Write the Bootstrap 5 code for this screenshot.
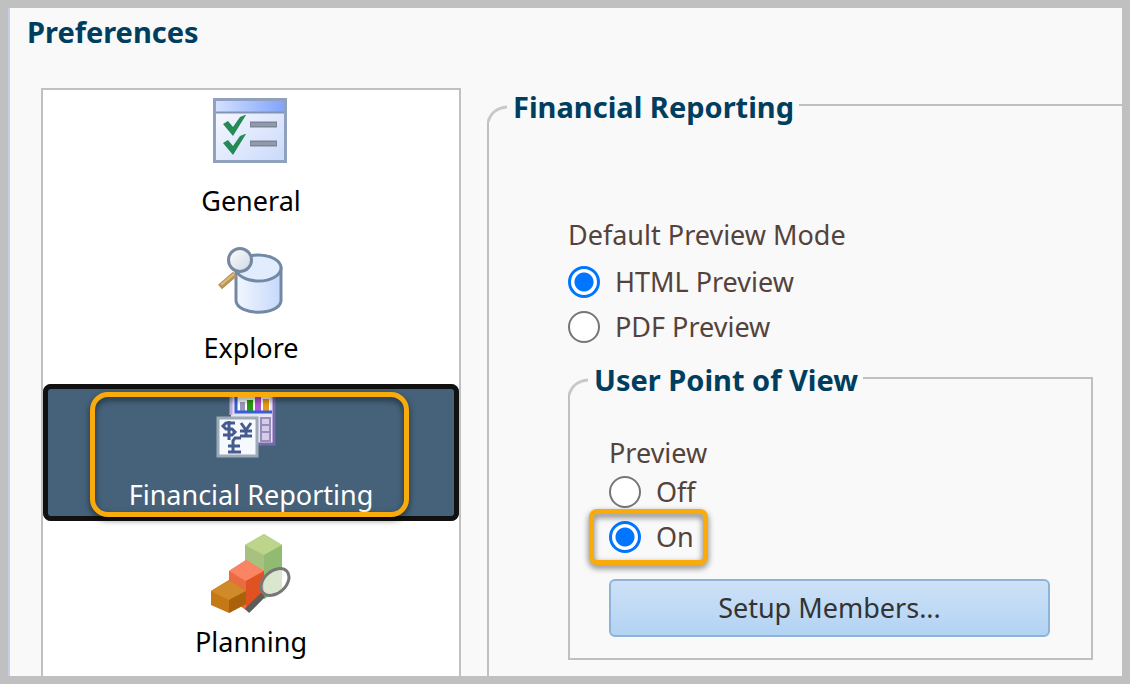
<!DOCTYPE html>
<html lang="en">
<head>
<meta charset="utf-8">
<meta name="viewport" content="width=device-width, initial-scale=1">
<title>Preferences</title>
<link href="https://cdn.jsdelivr.net/npm/bootstrap@5.3.0/dist/css/bootstrap.min.css" rel="stylesheet">
<style>
  body { font-family: "Noto Sans", "Open Sans", sans-serif; font-size: 27px; line-height: 36px; color: #54433c; }
  .window-frame { border: 8px solid #c0c0c0; background: #f9f9f9; }
  .window-edge { border-left: 2px solid #c3cfe6; }
  .heading-text { font-size: 29px; line-height: 34px; font-weight: 700; color: #003e60; }
  .page-title { padding: 7px 17px 0; margin-bottom: 39px; }
  .category-list { width: 420px; margin-left: 31px; background: #fff; border: 2px solid #c0c0c0; border-bottom: 0; }
  .category { height: 137px; padding: 3px 0 0; margin-bottom: 10px; background: none; border: 0; color: #000; gap: 10px; }
  .category svg { width: 80px; height: 80px; }
  .category.selected { background: #45627a; color: #fff; border-radius: 8px; outline: 5px solid #111; outline-offset: -5px; }
  .callout { border: 5px solid #f9ab0b; pointer-events: none; filter: drop-shadow(0 3px 3px rgba(0,0,0,.55)); }
  .callout-category { inset: 8px 50px 4px 47px; border-radius: 18px; }
  .callout-option { inset: -9px -14px -10px -20px; border-radius: 8px; }
  .group-pane { margin: 0 0 0 26px; }
  .group-pane legend { height: 34px; }
  .group-pane legend svg { width: 22px; height: 34px; }
  .group-rule { height: 2px; background: #c0c0c0; margin-left: 5px; }
  .group-body { border-left: 2px solid #c0c0c0; }
  .reporting-body { padding: 95px 29px 0 79px; }
  .view-body { border-right: 2px solid #c0c0c0; border-bottom: 2px solid #c0c0c0; padding: 40px 41px 21px 39px; }
  .view-group { margin-top: 16px; }
  /* right edge of the group, from the legend rule down to the body */
  .view-group legend::after { content: ""; width: 2px; height: 18px; background: #c0c0c0; align-self: flex-end; }
  .mode-label { margin-bottom: 10px; }
  .view-label { margin-bottom: 2px; }
  .choice { gap: 15px; height: 37px; }
  .choice .form-check-input { width: 32px; height: 32px; margin: 0; border: 2px solid #767676; background: #fff; }
  .choice .form-check-input:checked { border: 3px solid #0075ff; background: radial-gradient(circle, #0075ff 9px, #fff 10px); }
  .setup-btn { height: 58px; border: 2px solid #8eb3d8; border-radius: 6px; background: linear-gradient(#cde1f7, #b2d3f3); color: #333; font-size: 27px; }
</style>
</head>
<body>
<div class="window-frame vh-100 overflow-hidden">
  <div class="window-edge h-100 d-flex flex-column">
    <h1 class="page-title heading-text">Preferences</h1>
    <div class="d-flex flex-grow-1 overflow-hidden">
      <nav class="category-list flex-shrink-0" aria-label="Preference categories">
        <button type="button" class="category w-100 d-flex flex-column align-items-center">
          <svg viewBox="0 0 80 80" aria-hidden="true">
            <defs>
              <linearGradient id="bar" x2="1"><stop stop-color="#d4e1ff"/><stop offset="1" stop-color="#7fa2fb"/></linearGradient>
              <linearGradient id="sheet" x2="1" y2="1"><stop stop-color="#fbfcff"/><stop offset="1" stop-color="#c9d8fb"/></linearGradient>
            </defs>
            <rect x="4" y="6" width="71" height="63" fill="url(#sheet)"/>
            <rect x="4" y="6" width="71" height="13" fill="url(#bar)"/>
            <path d="M4 19.500H75" stroke="#8194b8" stroke-width="2"/>
            <rect x="3.500" y="6.500" width="71" height="62" fill="none" stroke="#8fa1bd" stroke-width="3"/>
            <path d="M12 31l5-3 5 6 7-10 5-2h1L22 43zM12 50l5-3 5 6 7-10 5-2h1L22 62z" fill="#268a55"/>
            <path d="M39 31.500H66M39 50.500H66" stroke="#7c8598" stroke-width="6"/>
            <path d="M40 31.500H65M40 50.500H65" stroke="#9199ab" stroke-width="3"/>
          </svg>
          <span>General</span>
        </button>
        <button type="button" class="category w-100 d-flex flex-column align-items-center">
          <svg viewBox="0 0 80 80" aria-hidden="true">
            <defs>
              <linearGradient id="drum" x2="1"><stop stop-color="#f2f7ff"/><stop offset="1" stop-color="#c6d8fa"/></linearGradient>
              <linearGradient id="lens" x2="1" y2="1"><stop stop-color="#fff"/><stop offset="1" stop-color="#ccd7e4"/></linearGradient>
            </defs>
            <path d="M25 28v33c2 15 43 15 45 0V28z" fill="url(#drum)" stroke="#7289a6" stroke-width="3"/>
            <ellipse cx="47.500" cy="28" rx="22.500" ry="13" fill="#e2ecff" stroke="#7289a6" stroke-width="3"/>
            <path d="M24 34L9 47" stroke="#b8935b" stroke-width="6"/>
            <path d="M23 34L10 45" stroke="#dfbd7d" stroke-width="2"/>
            <circle cx="29" cy="20" r="11.500" fill="url(#lens)" stroke="#7688a0" stroke-width="3"/>
          </svg>
          <span>Explore</span>
        </button>
        <button type="button" class="category selected w-100 d-flex flex-column align-items-center position-relative" aria-current="page">
          <svg viewBox="0 0 80 80" aria-hidden="true">
            <path d="M20 8h43v49H20z" fill="#e8e2f5"/>
            <path d="M63 8v49H46" fill="none" stroke="#7969ad" stroke-width="3"/>
            <path d="M20 8v20" stroke="#b8add7" stroke-width="3"/>
            <path d="M25 9h34v14H25z" fill="#fff"/>
            <path d="M29 15h5v9h-5z" fill="#9c98bd"/><path d="M36 13h6v11h-6z" fill="#279a10"/><path d="M44 9h6v15h-6z" fill="#b253d1"/><path d="M52 12h6v12h-6z" fill="#e39a17"/>
            <path d="M25 9v16h36" fill="none" stroke="#3460d5" stroke-width="3"/>
            <path d="M50 31h9v23h-9zM50 38h9M50 45h9" fill="#d4cce8" stroke="#988db9" stroke-width="2"/>
            <rect x="7" y="31" width="39" height="38" fill="#f6f9ff" stroke="#9dabb7" stroke-width="3"/>
            <g fill="none" stroke="#455a8e" stroke-width="3">
              <path d="M24 36h-9l-3 3 3 3h6l3 3-3 3h-9M18 34v19"/>
              <path d="M30 36l5 7 5-7M35 42v8M29 44h12M29 49h12"/>
              <path d="M30 51h-6l-2 3v11M17 59h12M17 65h13"/>
            </g>
          </svg>
          <span>Financial Reporting</span>
          <span class="callout callout-category position-absolute"></span>
        </button>
        <button type="button" class="category w-100 d-flex flex-column align-items-center">
          <svg viewBox="0 0 80 80" aria-hidden="true">
            <path d="M34 11L53 0l18 11v43L53 65 34 54z" fill="#a8c181"/>
            <path d="M34 11L53 0l18 11-18 10z" fill="#bcd58b"/><path d="M53 21l18-10v43L53 65z" fill="#91bb70"/>
            <path d="M18 37l17-11 18 11v26L35 76 18 65z" fill="#ea6a42"/>
            <path d="M18 37l17-11 18 11-18 10z" fill="#fb8465"/><path d="M35 47l18-10v26L35 75z" fill="#df5222"/>
            <path d="M0 57l18-11 17 11v13L18 79 0 71z" fill="#c47915"/>
            <path d="M0 57l18-11 17 11-17 9z" fill="#d08a29"/><path d="M18 66l17-9v13l-17 9z" fill="#a9620b"/>
            <ellipse cx="64" cy="48" rx="16" ry="11" transform="rotate(-42 64 48)" fill="#fff" fill-opacity=".65" stroke="#777" stroke-width="3"/>
            <path d="M52 61L36 77" stroke="#5c5c5c" stroke-width="6"/>
          </svg>
          <span>Planning</span>
        </button>
      </nav>
      <fieldset class="group-pane flex-grow-1 d-flex flex-column">
        <legend class="heading-text d-flex align-items-center mb-0">
          <svg class="me-1" viewBox="0 0 22 34" aria-hidden="true"><path d="M1 34C4 24 10 20 20 19" fill="none" stroke="#c8c8c8" stroke-width="3"/></svg>
          <span class="pt-1">Financial Reporting</span><span class="group-rule flex-grow-1"></span>
        </legend>
        <div class="group-body reporting-body flex-grow-1">
          <div id="mode-label" class="mode-label">Default Preview Mode</div>
          <div role="radiogroup" aria-labelledby="mode-label">
            <div class="choice d-flex align-items-center">
              <input class="form-check-input" type="radio" name="mode" id="mode-html" checked><label for="mode-html">HTML Preview</label>
            </div>
            <div class="choice d-flex align-items-center mt-2">
              <input class="form-check-input" type="radio" name="mode" id="mode-pdf"><label for="mode-pdf">PDF Preview</label>
            </div>
          </div>
          <fieldset class="view-group">
            <legend class="heading-text d-flex align-items-center mb-0">
              <svg class="me-1" viewBox="0 0 22 34" aria-hidden="true"><path d="M1 34C4 24 10 20 20 19" fill="none" stroke="#c8c8c8" stroke-width="3"/></svg>
              <span class="pt-1">User Point of View</span><span class="group-rule flex-grow-1"></span>
            </legend>
            <div class="group-body view-body">
              <div id="view-label" class="view-label">Preview</div>
              <div role="radiogroup" aria-labelledby="view-label" class="d-flex flex-column align-items-start gap-2 mb-4">
                <div class="choice d-flex align-items-center">
                  <input class="form-check-input" type="radio" name="view" id="view-off"><label for="view-off">Off</label>
                </div>
                <div class="choice d-flex align-items-center position-relative">
                  <input class="form-check-input" type="radio" name="view" id="view-on" checked><label for="view-on">On</label>
                  <span class="callout callout-option position-absolute"></span>
                </div>
              </div>
              <button type="button" class="btn setup-btn w-100 p-0">Setup Members...</button>
            </div>
          </fieldset>
        </div>
      </fieldset>
    </div>
  </div>
</div>
<script src="https://cdn.jsdelivr.net/npm/bootstrap@5.3.0/dist/js/bootstrap.bundle.min.js"></script>
</body>
</html>
